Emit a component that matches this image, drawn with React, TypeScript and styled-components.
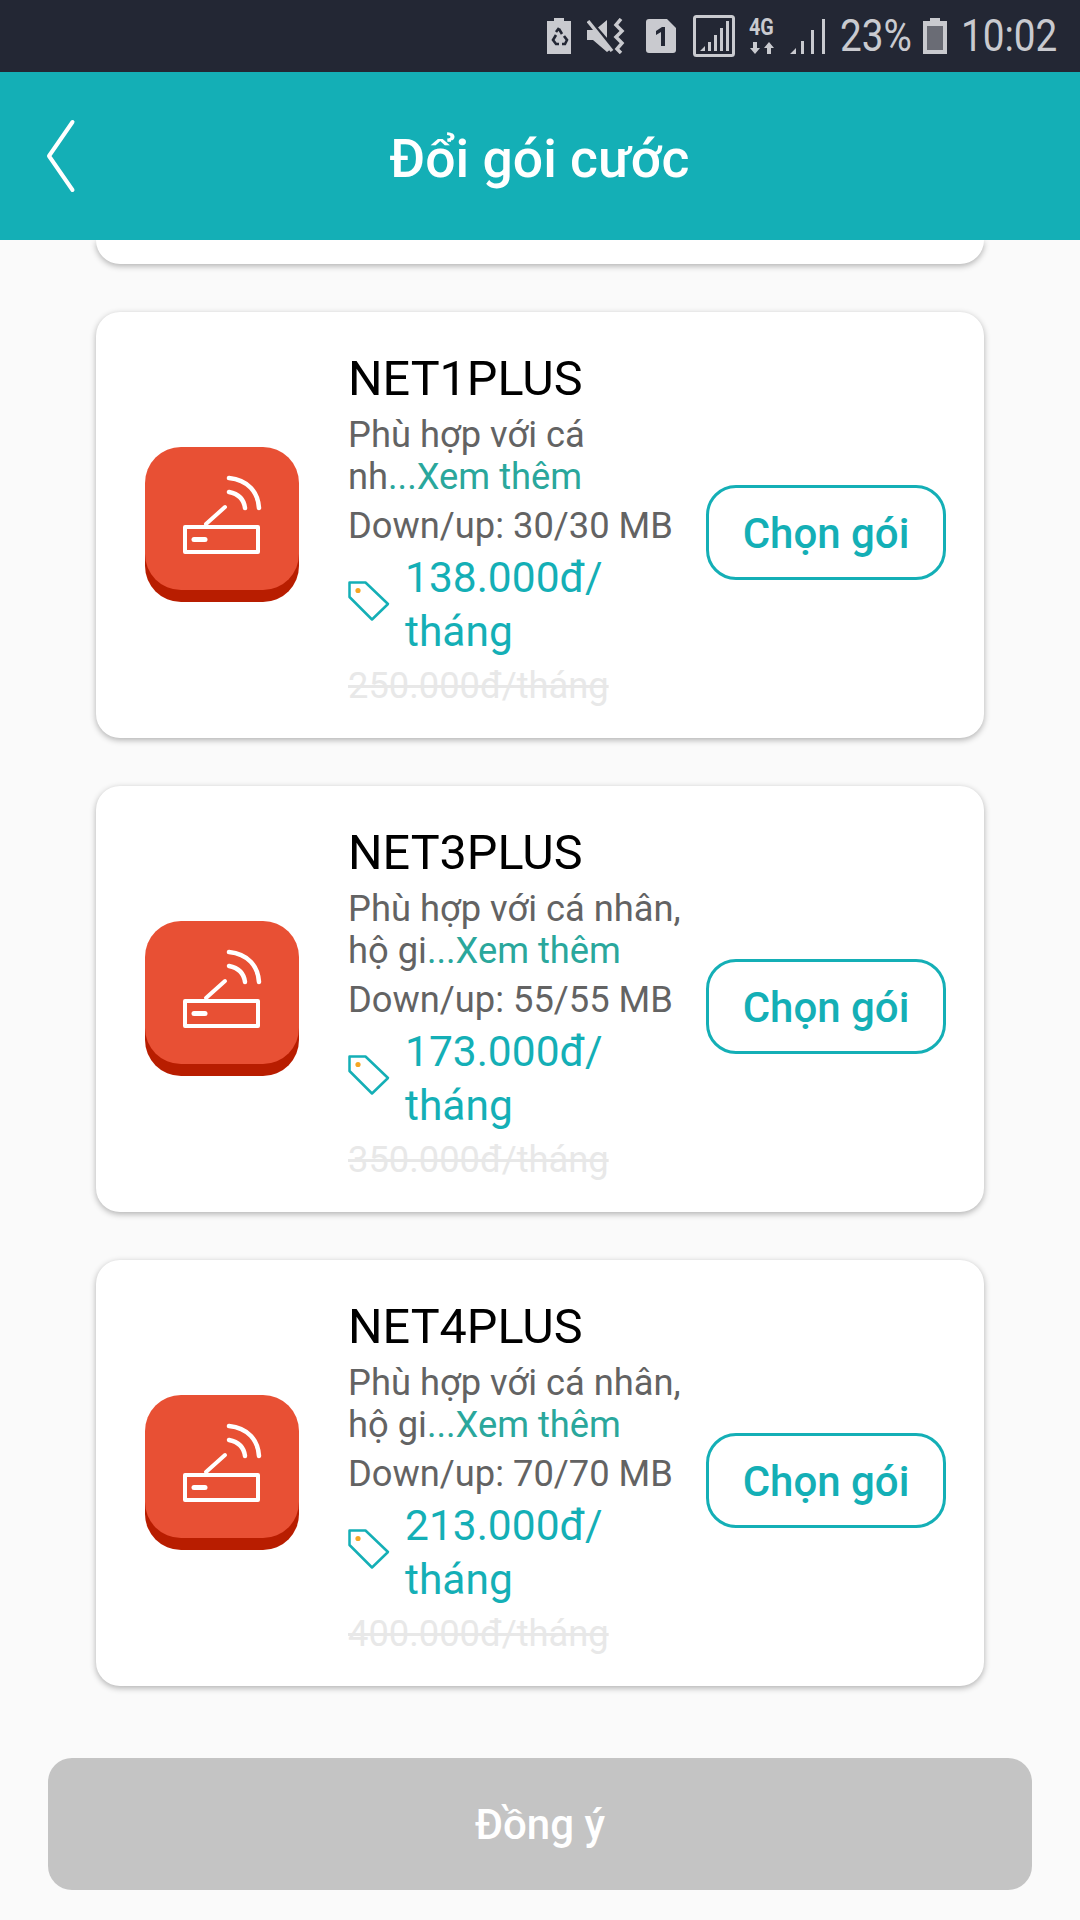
import React from "react"
import styled, { createGlobalStyle } from "styled-components"

const GlobalStyle = createGlobalStyle`
  html, body {
    margin: 0;
    padding: 0;
    background: #fafafa;
  }
  * {
    box-sizing: border-box;
  }
`

const Page = styled.div`
  width: 1080px;
  height: 1920px;
  display: flex;
  flex-direction: column;
  overflow: hidden;
  background: #fafafa;
  font-family: Roboto, "Liberation Sans", sans-serif;
`

const StatusBar = styled.div`
  height: 72px;
  flex: none;
  display: flex;
  align-items: center;
  justify-content: flex-end;
  padding-right: 22px;
  background: #232734;
  color: #c9cacf;
`

const StatusIcon = styled.svg<{ $left: number }>`
  flex: none;
  display: block;
  margin-left: ${props => props.$left}px;
`

const StatusText = styled.div<{ $width: number; $left: number }>`
  flex: none;
  width: ${props => props.$width}px;
  margin-left: ${props => props.$left}px;
  font-size: 45px;
  font-weight: 400;
  line-height: 72px;
  white-space: nowrap;
  transform: scaleX(0.86);
  transform-origin: left center;
`

const NetworkType = styled.div`
  flex: none;
  width: 27px;
  margin-left: 13px;
  display: flex;
  flex-direction: column;
  align-items: center;
`

const NetworkLabel = styled.div`
  font-size: 23px;
  font-weight: 700;
  line-height: 20px;
  transform: scaleX(0.86);
`

const NetworkArrows = styled.svg`
  display: block;
  margin-top: 3px;
`

const Header = styled.header`
  height: 168px;
  flex: none;
  position: relative;
  display: flex;
  align-items: center;
  justify-content: center;
  background: #14afb6;
`

const BackButton = styled.svg`
  position: absolute;
  left: 46px;
  top: 46px;
`

const Title = styled.h1`
  margin: 4px 0 0 -1px;
  font-size: 53.5px;
  font-weight: 500;
  color: #fff;
`

const List = styled.main`
  flex: 1;
  display: flex;
  flex-direction: column;
  gap: 48px;
  padding: 0 96px;
`

const CutCard = styled.div`
  height: 24px;
  flex: none;
  background: #fff;
  border-radius: 0 0 24px 24px;
  box-shadow: 0 2px 6px rgba(0, 0, 0, 0.3);
`

const Card = styled.section`
  height: 426px;
  flex: none;
  display: flex;
  align-items: center;
  padding: 0 38px 0 49px;
  background: #fff;
  border-radius: 24px;
  box-shadow: 0 2px 6px rgba(0, 0, 0, 0.3);
`

const IconWrap = styled.div`
  flex: none;
  margin-top: -2px;
  line-height: 0;
`

const Info = styled.div`
  width: 336px;
  margin: 8px 22px 0 49px;
  flex: none;
  color: #636363;
`

const PlanName = styled.div`
  font-size: 48.5px;
  line-height: 56px;
  color: #000;
`

const Desc = styled.div`
  margin-top: 7px;
  font-size: 36.3px;
  line-height: 42px;
  white-space: nowrap;
`

const More = styled.span`
  color: #2aa79c;
`

const Speed = styled.div`
  margin-top: 7px;
  font-size: 36.3px;
  line-height: 42px;
  white-space: nowrap;
`

const PriceRow = styled.div`
  display: flex;
  align-items: center;
  margin-top: 4px;
`

const Tag = styled.svg`
  flex: none;
  margin-bottom: 5px;
`

const PriceText = styled.div`
  width: 280px;
  margin-left: 15px;
  font-size: 42.5px;
  line-height: 54px;
  color: #14afb6;
`

const OldPrice = styled.div`
  margin-top: 5px;
  font-size: 36.3px;
  line-height: 44px;
  color: #e8e8e8;
  text-decoration: line-through;
  white-space: nowrap;
`

const PickButton = styled.button`
  width: 240px;
  height: 95px;
  flex: none;
  margin-top: 14px;
  padding: 3px 0 0;
  background: #fff;
  border: 3px solid #14afb6;
  border-radius: 30px;
  font-family: inherit;
  font-size: 42px;
  font-weight: 500;
  color: #14afb6;
`

const Footer = styled.footer`
  flex: none;
  padding: 0 48px 30px;
`

const Agree = styled.button`
  width: 100%;
  height: 132px;
  display: block;
  padding: 0;
  background: #c4c4c4;
  border: 0;
  border-radius: 24px;
  font-family: inherit;
  font-size: 42px;
  font-weight: 500;
  color: #fff;
`

const RouterIcon = () => (
  <IconWrap>
    <svg width="154" height="155" viewBox="0 0 154 155">
      <rect x="0" y="12" width="154" height="143" rx="36" fill="#b81d00" />
      <rect x="0" y="0" width="154" height="143" rx="36" fill="#e85034" />
      <g fill="none" stroke="#fff" strokeLinecap="round" strokeLinejoin="round">
        <rect x="40" y="80" width="73" height="25" strokeWidth="4" />
        <path d="M49 92.5 H60" strokeWidth="5" />
        <path d="M61 77 L80 60" strokeWidth="4" />
        <path d="M84 45 C94 47 99 53 100 61" strokeWidth="4.5" />
        <path d="M84 31 C103 33 113 45 114 61" strokeWidth="4.5" />
      </g>
    </svg>
  </IconWrap>
)

const TagIcon = () => (
  <Tag width="42" height="42" viewBox="0 0 42 42">
    <path
      d="M1.5 1.5 H17.5 L40 23 L24 38.5 L1.5 16 Z"
      fill="none"
      stroke="#14afb6"
      strokeWidth="2.5"
      strokeLinejoin="round"
    />
    <circle cx="10" cy="9.5" r="2.6" fill="#f5a623" />
  </Tag>
)

const plans = [
  {
    name: "NET1PLUS",
    desc: ["Phù hợp với cá", "nh"],
    speed: "30/30",
    price: "138.000",
    old: "250.000",
  },
  {
    name: "NET3PLUS",
    desc: ["Phù hợp với cá nhân,", "hộ gi"],
    speed: "55/55",
    price: "173.000",
    old: "350.000",
  },
  {
    name: "NET4PLUS",
    desc: ["Phù hợp với cá nhân,", "hộ gi"],
    speed: "70/70",
    price: "213.000",
    old: "400.000",
  },
]

const App = () => {
  return (
    <Page>
      <GlobalStyle />
      <StatusBar>
        <StatusIcon $left={0} width="24" height="36" viewBox="0 0 24 36">
          <path d="M7 0 H17 V3 H24 V36 H0 V3 H7 Z" fill="#c9cacf" />
          <path
            d="M12 11 L15 16 M9 17 L6 22 L9 26 H12 M15 26 H18 L20 22 L17 18 M9 14 L12 10"
            fill="none"
            stroke="#232734"
            strokeWidth="2.6"
          />
        </StatusIcon>
        <StatusIcon $left={16} width="38" height="36" viewBox="0 0 38 36">
          <path d="M0 12 H8 L20 2 V26 L24 31 L20 34 L6 22 H0 Z" fill="#c9cacf" />
          <path d="M2 2 L27 31" stroke="#232734" strokeWidth="4" />
          <path d="M1 3 L25 33" stroke="#c9cacf" strokeWidth="3.5" />
          <path
            d="M34 1 L29 7 L35 13 L29 19 L35 25 L30 31 L34 35"
            fill="none"
            stroke="#c9cacf"
            strokeWidth="3.5"
          />
        </StatusIcon>
        <StatusIcon $left={21} width="30" height="34" viewBox="0 0 30 34">
          <path d="M3 0 H21 L30 9 V31 Q30 34 27 34 H3 Q0 34 0 31 V3 Q0 0 3 0 Z" fill="#c9cacf" />
          <path d="M10 12 L16 8 H19 V27 H15 V13 L10 16 Z" fill="#232734" />
        </StatusIcon>
        <StatusIcon $left={17} width="42" height="42" viewBox="0 0 42 42">
          <rect x="1.5" y="1.5" width="39" height="39" rx="2" fill="none" stroke="#c9cacf" strokeWidth="3" />
          <path
            d="M7 36 L12 31 V36 Z M15 36 V27 H18 V36 Z M21 36 V20 H24 V36 Z M27 36 V13 H30 V36 Z M33 36 V6 H36 V36 Z"
            fill="#c9cacf"
          />
        </StatusIcon>
        <NetworkType>
          <NetworkLabel>4G</NetworkLabel>
          <NetworkArrows width="24" height="14" viewBox="0 0 24 14">
            <path
              d="M5 13 L0 7 H3 V1 H7 V7 H10 Z M19 1 L24 7 H21 V13 H17 V7 H14 Z"
              fill="#c9cacf"
            />
          </NetworkArrows>
        </NetworkType>
        <StatusIcon $left={15} width="35" height="36" viewBox="0 0 35 36">
          <path
            d="M0 36 L6 30 V36 Z M11 36 V23 H14 V36 Z M21 36 V12 H24 V36 Z M32 36 V1 H35 V36 Z"
            fill="#c9cacf"
          />
        </StatusIcon>
        <StatusText $left={15} $width={72}>23%</StatusText>
        <StatusIcon $left={11} width="24" height="36" viewBox="0 0 24 36">
          <path d="M7 0 H17 V3 H24 V36 H0 V3 H7 Z" fill="#c9cacf" />
          <rect x="4" y="8" width="16" height="24" fill="#6a6c75" />
        </StatusIcon>
        <StatusText $left={14} $width={97}>10:02</StatusText>
      </StatusBar>
      <Header>
        <BackButton width="30" height="76" viewBox="0 0 30 76">
          <path
            d="M26.5 4 L3 38 L26.5 72"
            fill="none"
            stroke="#fff"
            strokeWidth="4"
            strokeLinecap="round"
            strokeLinejoin="round"
          />
        </BackButton>
        <Title>Đổi gói cước</Title>
      </Header>
      <List>
        <CutCard />
        {plans.map(plan => (
          <Card key={plan.name}>
            <RouterIcon />
            <Info>
              <PlanName>{plan.name}</PlanName>
              <Desc>
                {plan.desc[0]}
                <br />
                {plan.desc[1]}
                <More>...Xem thêm</More>
              </Desc>
              <Speed>Down/up: {plan.speed} MB</Speed>
              <PriceRow>
                <TagIcon />
                <PriceText>
                  {plan.price}đ/
                  <wbr />
                  tháng
                </PriceText>
              </PriceRow>
              <OldPrice>{plan.old}đ/tháng</OldPrice>
            </Info>
            <PickButton>Chọn gói</PickButton>
          </Card>
        ))}
      </List>
      <Footer>
        <Agree>Đồng ý</Agree>
      </Footer>
    </Page>
  )
}

export default App
